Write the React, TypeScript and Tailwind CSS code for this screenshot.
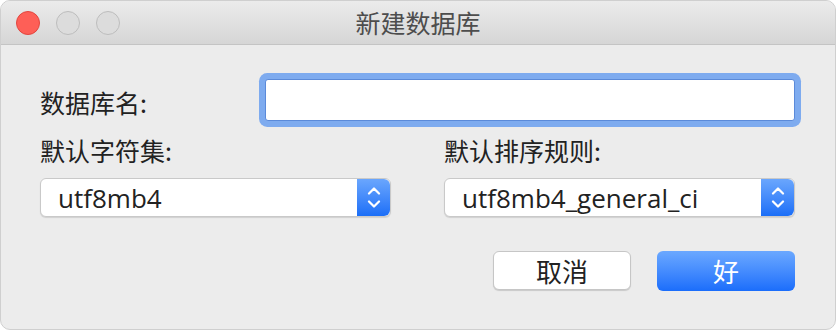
import React from "react";

const cjk = { fontFamily: '"Noto Sans CJK SC", "Noto Sans", sans-serif' };
const latin = { fontFamily: '"Open Sans", "Noto Sans CJK SC", sans-serif' };

function Stepper() {
  return (
    <div className="flex h-full w-[33px] flex-col items-center justify-center gap-[5px] rounded-r-[6px] bg-gradient-to-b from-[#6aa6fd] to-[#1a6ef7]">
      <svg width="14" height="8" viewBox="0 0 14 8" fill="none" stroke="white" strokeWidth={2.2} strokeLinecap="round" strokeLinejoin="round">
        <path d="M2 6.5L7 1.5L12 6.5" />
      </svg>
      <svg width="14" height="8" viewBox="0 0 14 8" fill="none" stroke="white" strokeWidth={2.2} strokeLinecap="round" strokeLinejoin="round">
        <path d="M2 1.5L7 6.5L12 1.5" />
      </svg>
    </div>
  );
}

function Select({ value }: { value: string }) {
  return (
    <div className="flex h-[39px] items-center rounded-[6px] border border-[#c9c9c9] bg-white shadow-[0_1px_1px_rgba(0,0,0,0.12)]">
      <span className="flex-1 pl-[17px] text-[26px] leading-none text-[#222]" style={latin}>
        {value}
      </span>
      <Stepper />
    </div>
  );
}

export default function App() {
  return (
    <div className="min-h-screen bg-white">
      <div className="flex h-[330px] w-[836px] flex-col overflow-hidden rounded-[10px] border border-[#cfcfcf] bg-[#ececec]">
        {/* title bar */}
        <div className="relative flex h-[44px] items-center border-b border-[#c4c4c4] bg-gradient-to-b from-[#ebebeb] to-[#d6d6d6] pl-[15px]">
          <div className="flex gap-[16px]">
            <div className="h-[24px] w-[24px] rounded-full border border-[#e2463f] bg-[#fe5f57]" />
            <div className="h-[24px] w-[24px] rounded-full border border-[#bdbdbd] bg-[#dcdcdc]" />
            <div className="h-[24px] w-[24px] rounded-full border border-[#bdbdbd] bg-[#dcdcdc]" />
          </div>
          <div className="absolute inset-0 flex items-center justify-center text-[25px] text-[#4d4d4d]" style={cjk}>
            新建数据库
          </div>
        </div>

        {/* body */}
        <div className="flex flex-col pl-[39px] pr-[40px] pt-[34px]" style={cjk}>
          <div className="flex items-center">
            <span className="flex-1 pt-[5px] text-[25px] leading-none text-[#222]">数据库名:</span>
            <div className="h-[42px] w-[530px] rounded-[3px] border border-[#5b8ad9] bg-white shadow-[0_0_0_6px_#7eabef]" />
          </div>

          <div className="mt-[14px] grid grid-cols-2 gap-x-[53px]">
            <span className="h-[30px] text-[25px] leading-[30px] text-[#222]">默认字符集:</span>
            <span className="h-[30px] text-[25px] leading-[30px] text-[#222]">默认排序规则:</span>
            <div className="mt-[13px]">
              <Select value="utf8mb4" />
            </div>
            <div className="mt-[13px]">
              <Select value="utf8mb4_general_ci" />
            </div>
          </div>

          <div className="mt-[34px] flex justify-end gap-[26px]">
            <button className="flex h-[39px] w-[138px] items-center justify-center rounded-[6px] border border-[#c6c6c6] bg-white text-[26px] leading-none text-[#222] shadow-[0_1px_1px_rgba(0,0,0,0.15)]">
              取消
            </button>
            <button className="flex h-[40px] w-[138px] items-center justify-center rounded-[6px] bg-gradient-to-b from-[#6ba8ff] to-[#1a6dfb] text-[26px] leading-none text-white">
              好
            </button>
          </div>
        </div>
      </div>
    </div>
  );
}
